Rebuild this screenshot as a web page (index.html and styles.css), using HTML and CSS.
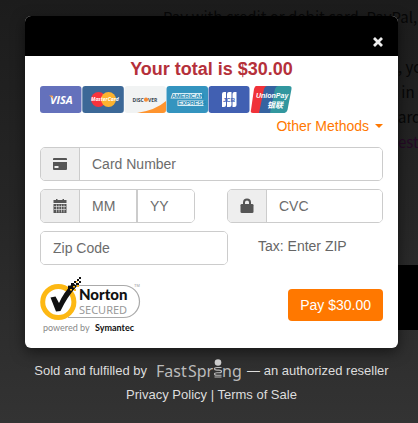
FILE: index.html
```html
<!DOCTYPE html>
<html lang="en">
<head>
<meta charset="utf-8">
<title>Checkout</title>
<meta name="viewport" content="width=device-width, initial-scale=1">
<link rel="stylesheet" href="styles.css">
</head>
<body>
<div class="backdrop" aria-hidden="true">
  <p class="intro">Pay with credit or debit card, PayPal,</p>
  <div class="aside">
    <p>, yo</p>
    <p>&nbsp;in t</p>
    <p>ard</p>
    <p class="visited">est</p>
  </div>
  <div class="band"></div>
</div>
<main class="checkout">
  <section class="dialog" role="dialog" aria-labelledby="total">
    <header class="dialog-header">
      <button class="close" type="button" aria-label="Close">
        <svg viewBox="0 0 12 12" class="close-icon"><path d="M2 2l8 8M10 2l-8 8" stroke="#eee" stroke-width="2.800"/></svg>
      </button>
    </header>
    <form class="dialog-body">
      <h1 class="total" id="total">Your total is $30.00</h1>
      <svg class="cards" viewBox="0 0 252 27" role="img" aria-label="Accepted cards">
        <rect width="41.500" height="27" rx="3" fill="#6471bc"/>
        <text x="10" y="17.500" class="visa" fill="#fff">VISA</text>
        <path d="M9 9.500h3.500l1 4.500q-1-2.500-4.500-4.500z" fill="#f5a04a"/>
        <rect x="42.300" width="41.500" height="27" rx="3" fill="#3c6897"/>
        <circle cx="58.500" cy="13.500" r="7.500" fill="#f8333c"/>
        <circle cx="68.500" cy="13.500" r="7.500" fill="#fdb32f"/>
        <text x="51" y="15.400" class="mastercard" fill="#fff">MasterCard</text>
        <rect x="84.500" width="41.500" height="27" rx="3" fill="#f1f3f3"/>
        <path d="M97 27Q116 24 126 15v9q0 3-3 3z" fill="#fe942f"/>
        <text x="92.500" y="15.600" class="discover" fill="#394650">DISC</text>
        <circle cx="106" cy="13.700" r="2.100" fill="#f58b35"/>
        <text x="108" y="15.600" class="discover" fill="#394650">VER</text>
        <rect x="126.500" width="41.500" height="27" rx="3" fill="#3494bf"/>
        <path d="M132.500 7h29.500v5.500h-31.500zM137.500 14.500h26v5.500h-26z" fill="#d7edf5"/>
        <text x="131.500" y="11.800" class="amex" fill="#2588b3">AMERICAN</text>
        <text x="138" y="19.300" class="amex" fill="#2588b3">EXPRESS</text>
        <rect x="168.500" width="41" height="27" rx="3" fill="#4160b2"/>
        <path d="M184 6h2v13q0 2-2 2h-2V8q0-2 2-2zM189 6h2.500v13q0 2-2 2H187V8q0-2 2-2zM194.500 6h2v13q0 2-2 2h-2V8q0-2 2-2z" fill="#fff"/>
        <text x="183" y="15.500" class="jcb" fill="#4160b2">JCB</text>
        <path d="M216 0h14l-5 27h-12q-3 0-2-3l3-21q1-3 2-3z" fill="#f03239"/>
        <path d="M227 0h12l-5 27h-15l5-24q1-3 3-3z" fill="#3563a0"/>
        <path d="M238 0h11q3 0 2.500 3l-4 21q-1 3-3 3H230l5-24q1-3 3-3z" fill="#32979f"/>
        <text x="216" y="12" class="unionpay" fill="#fff">UnionPay</text>
        <text x="227" y="22" class="unionpay-cjk" fill="#fff">银联</text>
      </svg>
      <button class="methods" type="button">Other Methods <span class="caret"></span></button>
      <div class="field">
        <label class="addon" for="number" aria-label="Card number">
          <svg viewBox="0 0 16 14" class="icon"><path d="M1 2q0-1 1-1h12q1 0 1 1v1H1zM1 5h14v7q0 1-1 1H2q-1 0-1-1zM2.500 9v2h4V9z" fill="#555" fill-rule="evenodd"/></svg>
        </label>
        <input id="number" type="text" placeholder="Card Number">
      </div>
      <div class="row">
        <div class="field expiry">
          <label class="addon" for="month" aria-label="Expiry date">
            <svg viewBox="0 0 16 16" class="icon"><path d="M2 2h2V1h1.500v1h5V1H12v1h2.500v3H1.500V2zM1.500 6h13v9h-13z" fill="#555"/><path d="M2 8.500h12M2 11.500h12M4.500 6.500v8M7 6.500v8M9.500 6.500v8M12 6.500v8" stroke="#eee" stroke-width=".6"/></svg>
          </label>
          <input id="month" type="text" placeholder="MM" aria-label="Month">
          <input type="text" placeholder="YY" aria-label="Year">
        </div>
        <div class="field cvc">
          <label class="addon" for="cvc" aria-label="Security code">
            <svg viewBox="0 0 16 16" class="icon"><path d="M5 7V4.500a3 3 0 0 1 6 0V7" fill="none" stroke="#555" stroke-width="2"/><rect x="1.500" y="6" width="13" height="9" rx="1.300" fill="#555"/></svg>
          </label>
          <input id="cvc" type="text" placeholder="CVC">
        </div>
      </div>
      <div class="row zip-row">
        <div class="field zip">
          <input type="text" placeholder="Zip Code" aria-label="Zip Code">
        </div>
        <p class="tax">Tax: Enter ZIP</p>
      </div>
      <div class="row actions">
        <svg class="norton" viewBox="0 0 102 56" role="img" aria-label="Norton Secured, powered by Symantec">
          <path d="M28 8.500H83.500a16 16 0 0 1 0 32H28" fill="#fff" stroke="#aaa" stroke-width="1.200"/>
          <circle cx="18.300" cy="25" r="15.600" fill="#fff" stroke="#fdb813" stroke-width="5"/>
          <path d="M10.500 20.500l5-1 3.500 6.500Q24 15 33 6l4 3Q27 20 20.500 34l-4.500.5z" fill="#111"/>
          <path d="M34 4h2v2h-2zM36 6h3v2h-3zM31 6h3v3h-3zM37 2h2v2h-2zM39 0h2v2h-2zM39 4h2v2h-2zM28 9h3v3h-3z" fill="#111"/>
          <path d="M33 9h2v1.500h-2zM36 4h1.500v1.500H36zM37 8h2v2h-2zM30 12h2v1.500h-2zM34 12h2v2h-2z" fill="#fdb813"/>
          <text x="39" y="22.500" class="norton-name" fill="#111">Norton</text>
          <text x="39" y="36.500" class="norton-tag" fill="#999">SECURED</text>
          <text x="94" y="10" class="norton-tm" fill="#999">TM</text>
          <text x="3" y="54" class="norton-by" fill="#888">powered by</text>
          <text x="55" y="54" class="norton-by norton-strong" fill="#111">Symantec</text>
        </svg>
        <button class="pay" type="submit">Pay $30.00</button>
      </div>
    </form>
  </section>
  <footer class="legal">
    <p class="seller">
      <span>Sold and fulfilled by</span>
      <svg class="fastspring" viewBox="0 0 88 24" role="img" aria-label="FastSpring">
        <text x="3" y="18" class="wordmark" fill="#bbb">Fast</text>
        <text x="35" y="18" class="wordmark" fill="#bbb">Spr</text>
        <text x="69" y="18" class="wordmark" fill="#bbb">ng</text>
        <circle cx="65" cy="3.500" r="3.300" fill="#ccc"/>
        <path d="M68.500 8.500h-4.500q-2.500 0-2.500 1.300t2.500 1.300h2q2.500 0 2.500 1.300t-2.500 1.300h-2q-2.500 0-2.500 1.300t2.500 1.300h4.500M61.500 18h7" fill="none" stroke="#bbb" stroke-width="1.100"/>
      </svg>
      <span>— an authorized reseller</span>
    </p>
    <p class="links"><a href="#privacy">Privacy Policy</a> | <a href="#terms">Terms of Sale</a></p>
  </footer>
</main>
</body>
</html>
```
FILE: styles.css
```css
* {
  box-sizing: border-box;
}

body {
  margin: 0;
  min-height: 100vh;
  background: linear-gradient(#1c1c1c, #262626 50%, #333) no-repeat;
  font-family: "Liberation Sans", Arial, sans-serif;
  font-size: 14px;
  color: #666;
}

p,
h1 {
  margin: 0;
}

button,
input {
  font: inherit;
}

button {
  border: 0;
  cursor: pointer;
}

/* Dimmed page behind the dialog */
.backdrop {
  position: absolute;
  inset: 0;
  padding-top: 4px;
  overflow: hidden;
  font: 15px/25px "Noto Sans CJK JP", sans-serif;
  white-space: nowrap;
  color: #070707;
}

.intro {
  padding-left: 163px;
}

.aside {
  width: 20px;
  margin: 25px 0 0 auto;
}

.visited {
  color: #250a25;
}

.band {
  width: 50%;
  height: 65px;
  margin: 111px 0 0 auto;
  background: #000;
}

.checkout {
  position: relative;
  padding: 16px 20px 0 25px;
}

.dialog {
  border-radius: 6px;
  background: #fff;
  box-shadow: 0 4px 14px rgba(0, 0, 0, 0.5);
}

.dialog-header {
  display: flex;
  align-items: flex-end;
  justify-content: flex-end;
  height: 40px;
  padding: 0 14px 8px;
  border-radius: 6px 6px 0 0;
  background: #000;
}

.close {
  padding: 0;
  background: none;
}

.close-icon {
  display: block;
  width: 12px;
  height: 12px;
}

.dialog-body {
  padding: 2px 15px 15px;
}

.total {
  font-size: 18px;
  line-height: 22px;
  text-align: center;
  color: #b5303a;
}

.cards {
  display: block;
  width: 252px;
  height: 27px;
  margin-top: 6px;
}

.visa {
  font: italic bold 11px "Open Sans", sans-serif;
}

.mastercard {
  font: italic bold 5px "Open Sans", sans-serif;
}

.discover {
  font: bold 5px "Open Sans", sans-serif;
}

.amex {
  font: bold 6px "Liberation Sans", sans-serif;
}

.jcb {
  font: bold 6px "Liberation Sans", sans-serif;
}

.unionpay {
  font: italic bold 7px "Liberation Sans", sans-serif;
}

.unionpay-cjk {
  font: italic bold 8px "Noto Sans CJK SC", sans-serif;
}

.methods {
  display: flex;
  align-items: center;
  gap: 6px;
  margin: 4px 0 12px auto;
  padding: 0;
  background: none;
  line-height: 18px;
  color: #ff7800;
}

.caret {
  border: 4px solid transparent;
  border-top-color: currentColor;
  border-bottom: 0;
}

.field {
  display: flex;
  height: 34px;
  border: 1px solid #ccc;
  border-radius: 5px;
  overflow: hidden;
}

.field input {
  flex: 1;
  min-width: 0;
  padding: 0 12px;
  border: 0;
  background: #fff;
  color: #555;
}

.field input::placeholder {
  color: #6c6c6c;
  opacity: 1;
}

.field input + input {
  border-left: 2px solid #ccc;
}

.addon {
  display: flex;
  flex: none;
  align-items: center;
  justify-content: center;
  width: 39px;
  border-right: 1px solid #ccc;
  background: #eee;
}

.icon {
  width: 16px;
  height: 16px;
}

.row {
  display: flex;
  align-items: center;
  justify-content: space-between;
  margin-top: 8px;
}

.expiry {
  flex: 0 1 155px;
}

.cvc {
  flex: 0 1 156px;
}

.zip-row {
  justify-content: flex-start;
  gap: 30px;
}

.zip {
  flex: 0 1 188px;
}

.tax {
  padding-bottom: 4px;
}

.norton {
  width: 102px;
  height: 56px;
}

.actions {
  margin-top: 12px;
}

.norton-name {
  font: 900 15px Lato, sans-serif;
}

.norton-tag {
  font: 11px "Noto Sans", sans-serif;
}

.norton-tm {
  font: 4px "Liberation Sans", sans-serif;
}

.norton-by {
  font: 9px Lato, sans-serif;
}

.norton-strong {
  font-weight: bold;
}

.pay {
  height: 32px;
  padding: 0 12px;
  border-radius: 4px;
  background: #ff7800;
  color: #fff;
}

.legal {
  padding-top: 11px;
  font-size: 13px;
  line-height: 24px;
  text-align: center;
  color: #ddd;
}

.seller {
  display: flex;
  align-items: center;
  justify-content: center;
  gap: 6px;
  white-space: nowrap;
}

.fastspring {
  width: 88px;
  height: 24px;
}

.wordmark {
  font: 16px "Noto Sans", sans-serif;
}

.legal a {
  color: inherit;
  text-decoration: none;
}
```
